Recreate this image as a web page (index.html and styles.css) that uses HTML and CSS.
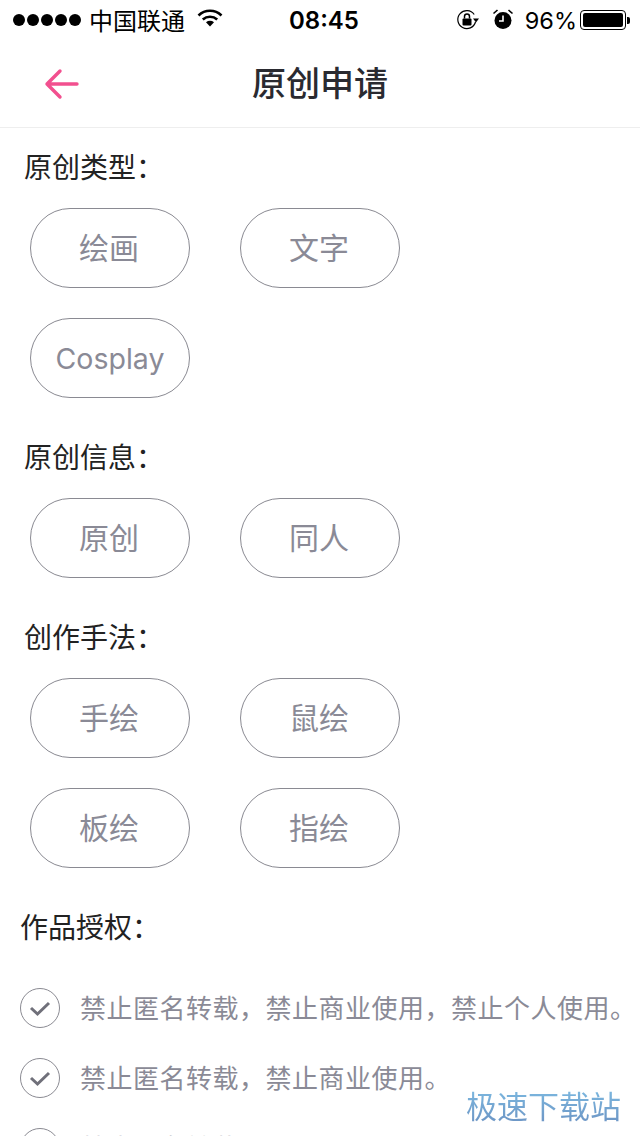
FILE: index.html
```html
<!DOCTYPE html>
<html lang="zh-CN">
<head>
<meta charset="utf-8">
<title>原创申请</title>
<link rel="stylesheet" href="styles.css">
</head>
<body>
<div class="screen">
  <div class="status">
    <div class="status-left">
      <div class="dots"><i></i><i></i><i></i><i></i><i></i></div>
      <span class="carrier">中国联通</span>
      <svg class="wifi" width="26" height="20" viewBox="0 0 26 20"><path d="M1.500 7.500C8 1.200 18 1.200 24.500 7.500" fill="none" stroke="#000" stroke-width="2.600"/><path d="M5.800 11.500C10 7.800 16 7.800 20.200 11.500" fill="none" stroke="#000" stroke-width="2.600"/><path d="M9 14.200C11.400 12.400 14.600 12.400 17 14.200L13 18.600Z" fill="#000"/></svg>
    </div>
    <span class="time">08:45</span>
    <div class="status-right">
      <svg class="lock" width="24" height="22" viewBox="0 0 24 22"><path d="M19.500 13A9 9 0 1 1 18.200 5.500" fill="none" stroke="#000" stroke-width="1.200"/><path d="M17 9.500H23L20 13.500Z" fill="#000"/><rect x="6.500" y="9.500" width="9" height="7" rx="1" fill="#000"/><path d="M8.500 9.500V7.500a2.500 2.500 0 0 1 5 0V9.500" fill="none" stroke="#000" stroke-width="1.500"/></svg>
      <svg class="alarm" width="22" height="22" viewBox="0 0 22 22"><circle cx="11" cy="12.500" r="8.500" fill="#000"/><path d="M11 7.500V13H7" fill="none" stroke="#fff" stroke-width="1.600"/><path d="M1.500 5.500L5.500 2M20.500 5.500L16.500 2" stroke="#000" stroke-width="1.600"/></svg>
      <span class="percent">96%</span>
      <div class="battery"><div class="battery-fill"></div></div>
      <div class="battery-tip"></div>
    </div>
  </div>

  <header class="nav">
    <svg class="back" width="36" height="32" viewBox="0 0 36 32"><path d="M33 16H3M16 3L3 16L16 29" fill="none" stroke="#f2508f" stroke-width="3.400" stroke-linecap="round" stroke-linejoin="round"/></svg>
    <h1 class="title">原创申请</h1>
  </header>

  <main class="content">
    <h2 class="label">原创类型：</h2>
    <div class="chips">
      <div class="chip">绘画</div>
      <div class="chip">文字</div>
      <div class="chip chip-latin">Cosplay</div>
    </div>

    <h2 class="label">原创信息：</h2>
    <div class="chips">
      <div class="chip">原创</div>
      <div class="chip">同人</div>
    </div>

    <h2 class="label">创作手法：</h2>
    <div class="chips">
      <div class="chip">手绘</div>
      <div class="chip">鼠绘</div>
      <div class="chip">板绘</div>
      <div class="chip">指绘</div>
    </div>

    <h2 class="label label-license">作品授权：</h2>
    <ul class="licenses">
      <li class="license">
        <svg class="check" width="40" height="40" viewBox="0 0 40 40"><circle cx="20" cy="20" r="19.500" fill="none" stroke="#8a8a92" stroke-width="1"/><path d="M11 20L17.500 26L29 15" fill="none" stroke="#70707a" stroke-width="3"/></svg>
        <span>禁止匿名转载，禁止商业使用，禁止个人使用。</span>
      </li>
      <li class="license">
        <svg class="check" width="40" height="40" viewBox="0 0 40 40"><circle cx="20" cy="20" r="19.500" fill="none" stroke="#8a8a92" stroke-width="1"/><path d="M11 20L17.500 26L29 15" fill="none" stroke="#70707a" stroke-width="3"/></svg>
        <span>禁止匿名转载，禁止商业使用。</span>
      </li>
      <li class="license">
        <svg class="check" width="40" height="40" viewBox="0 0 40 40"><circle cx="20" cy="20" r="19.500" fill="none" stroke="#8a8a92" stroke-width="1"/><path d="M11 20L17.500 26L29 15" fill="none" stroke="#70707a" stroke-width="3"/></svg>
        <span>禁止匿名转载。</span>
      </li>
    </ul>
  </main>

  <div class="watermark">极速下载站</div>
</div>
</body>
</html>
```

FILE: styles.css
```css
* { box-sizing: border-box; }
html, body { margin: 0; padding: 0; background: #fff; }
.screen {
  position: relative;
  width: 640px;
  height: 1136px;
  overflow: hidden;
  font-family: "Noto Sans CJK SC", "Noto Sans", sans-serif;
  color: #222;
}
.status {
  position: relative;
  height: 40px;
  display: flex;
  align-items: center;
  justify-content: space-between;
  padding: 0 10px 0 13px;
  color: #000;
}
.status-left, .status-right { display: flex; align-items: center; }
.dots { display: flex; gap: 2px; margin-right: 8px; }
.dots i { width: 12px; height: 12px; border-radius: 50%; background: #000; }
.carrier { font-size: 24px; line-height: 40px; }
.wifi { margin-left: 12px; margin-top: -4px; }
.time {
  position: absolute;
  left: 289px;
  font-family: Inter, "Liberation Sans", sans-serif;
  font-weight: 600;
  font-size: 24px;
}
.lock { margin-right: 12px; margin-top: -1px; }
.alarm { margin-right: 11px; margin-top: -2px; }
.percent {
  font-family: Inter, "Liberation Sans", sans-serif;
  font-size: 23.500px;
  margin-right: 3px;
}
.battery {
  width: 46px;
  height: 20px;
  border: 1px solid #000;
  border-radius: 4px;
  padding: 2px;
}
.battery-fill { width: 100%; height: 100%; background: #000; border-radius: 2px; }
.battery-tip { width: 3px; height: 7px; background: #000; border-radius: 0 2px 2px 0; margin-left: 1px; }

.nav {
  height: 88px;
  display: flex;
  align-items: center;
  justify-content: center;
  position: relative;
  padding-bottom: 4px;
  border-bottom: 1px solid #eee;
}
.back { position: absolute; left: 44px; top: 28px; width: 36px; height: 32px; }
.title { margin: 0; font-size: 34px; font-weight: 500; color: #2a2a30; line-height: 80px; }

.content { padding-top: 20px; }
.label {
  margin: 0 0 20px;
  padding-left: 24px;
  height: 40px;
  font-size: 28px;
  font-weight: 400;
  line-height: 37px;
  color: #222;
}
.label-license { padding-left: 20px; margin-top: 40px; margin-bottom: 40px; }
.chips {
  display: flex;
  flex-wrap: wrap;
  gap: 30px 50px;
  width: 400px;
  padding-left: 30px;
  margin-bottom: 40px;
}
.chip {
  width: 160px;
  height: 80px;
  border: 1px solid #8a8a92;
  border-radius: 40px;
  display: flex;
  align-items: center;
  justify-content: center;
  padding: 0 2px 4px 0;
  font-size: 30px;
  color: #8a8a96;
}
.chip-latin { font-family: Inter, "Noto Sans", sans-serif; font-size: 28.500px; padding: 0; }
.licenses {
  list-style: none;
  margin: 0;
  padding: 0 0 0 20px;
  display: flex;
  flex-direction: column;
  gap: 30px;
}
.license {
  display: flex;
  align-items: center;
  gap: 20px;
  height: 40px;
  padding-bottom: 4px;
  font-size: 26px;
  letter-spacing: 0.500px;
  color: #8a8a96;
  white-space: nowrap;
}
.check { flex: none; margin-bottom: -4px; }
.watermark {
  position: absolute;
  left: 466px;
  top: 1081px;
  font-size: 31px;
  line-height: 48px;
  white-space: nowrap;
  font-weight: 400;
  background: linear-gradient(#7fc0e6, #6a8fc0);
  -webkit-background-clip: text;
  background-clip: text;
  color: transparent;
}
```
